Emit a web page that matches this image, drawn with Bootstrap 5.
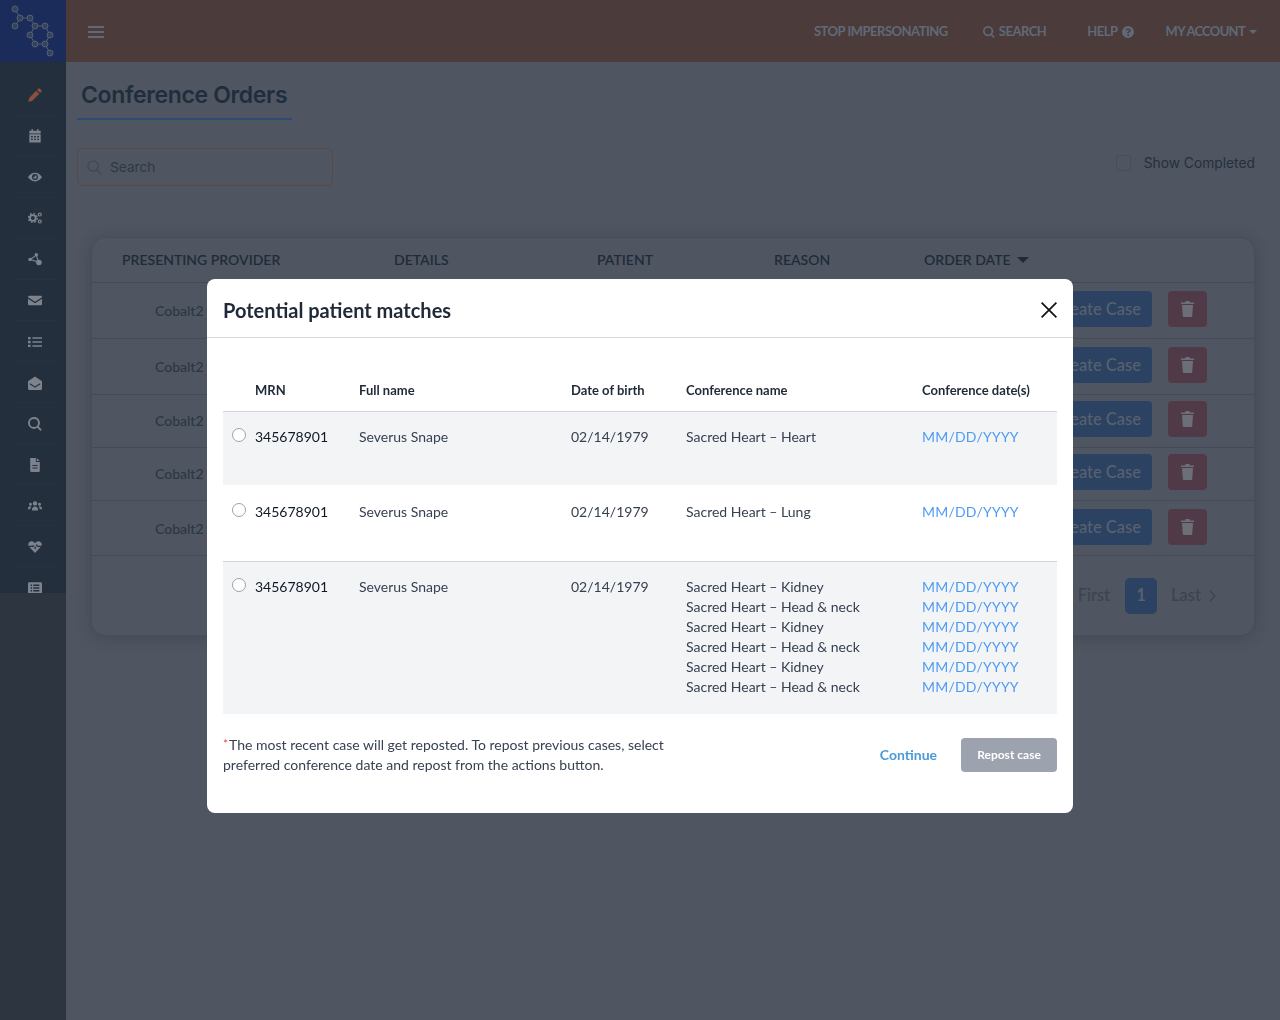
<!doctype html>
<html lang="en">
  <head>
    <meta charset="utf-8">
    <meta name="viewport" content="width=device-width, initial-scale=1">
    <title>Conference Orders</title>
    <link href="https://cdn.jsdelivr.net/npm/bootstrap@5.3.6/dist/css/bootstrap.min.css" rel="stylesheet">
    <style>
      body {
        background: #4f5661;
        font-family: Lato, "Liberation Sans", sans-serif;
        height: 1020px;
        overflow: hidden;
      }

      /* sidebar */
      .side-col { width: 66px; background: #2d3540; height: 1020px; flex: none; }
      .side-logo { height: 62px; background: #1b2b5a; }
      .side-logo svg { width: 66px; height: 62px; display: block; }
      .side-menu { height: 531px; background: #232f3c; overflow: hidden; padding-top: 12.5px; }
      .side-item { height: 41.08px; display: flex; align-items: center; justify-content: center; position: relative; padding-left: 4px; }
      .side-item::after { content: ""; position: absolute; left: 14px; right: 10px; bottom: 0; height: 1px; background: #26323e; }
      .side-item svg { width: 14px; height: 14px; fill: #7c838d; }
      .side-item.is-active svg { fill: #8a4f3f; }

      /* top bar */
      .top-bar { height: 62px; background: #4c3b3b; color: #5f6a76; font-size: 13px; letter-spacing: -.5px; font-weight: 700; padding: 1px 23px 0 22px; }
      .burger { width: 16px; height: 12px; border-top: 2px solid #5f6a76; border-bottom: 2px solid #5f6a76; position: relative; }
      .burger::after { content: ""; position: absolute; left: 0; right: 0; top: 3px; height: 2px; background: #5f6a76; }
      .top-link { display: flex; align-items: center; white-space: nowrap; }
      .top-link svg { fill: #5f6a76; }
      .top-stop { margin-right: 35px; }
      .top-find { margin-right: 41px; }
      .top-help { margin-right: 32px; }
      .top-acct { letter-spacing: -.7px; }
      .caret-sm { width: 0; height: 0; border: 4px solid transparent; border-top-color: #5f6a76; border-bottom: 0; margin-left: 4px; }

      /* page */
      .page-wrap { padding: 0 25px 0 11px; }
      .page-head { width: 215px; height: 58px; padding: 16px 0 0 4px; border-bottom: 2px solid #2f4a75; font-family: Inter, "Liberation Sans", sans-serif; font-size: 23px; line-height: 34px; font-weight: 600; letter-spacing: -.35px; color: #1f2d3d; white-space: nowrap; }
      .filter-row { margin-top: 28px; }
      .search-box { width: 256px; height: 38px; border: 1px solid #5c4843; border-radius: 6px; color: #2e3846; font-size: 13.7px; font-family: Inter, "Liberation Sans", sans-serif; padding-left: 9px; gap: 8px; }
      .search-box svg { width: 15px; height: 15px; stroke: #3c4856; fill: none; stroke-width: 1.2; }
      .show-done { color: #252f3d; font-size: 13.8px; font-family: Inter, "Liberation Sans", sans-serif; gap: 13px; margin-top: -8px; }
      .show-box { width: 15px; height: 16px; border: 1px solid #454e5a; border-radius: 3px; }

      .orders-card { margin: 51px 0 0 14px; height: 399px; border: 1px solid #464d58; border-radius: 14px; box-shadow: 0 2px 14px rgba(30, 36, 46, .25); overflow: hidden; }
      .orders-table { width: 100%; table-layout: fixed; border-collapse: collapse; color: #2b3644; }
      .orders-table th { font-size: 14px; font-weight: 600; height: 44px; padding: 0 0 1px 30px; color: #1f2b3a; border-bottom: 1px solid #444b56; white-space: nowrap; }
      .orders-table td { font-size: 14px; vertical-align: top; border-bottom: 1px solid #444b56; padding: 8px 0 10px 0; }
      .orders-table tr.row-a td { padding-bottom: 11px; }
      .orders-table tr.row-b td { padding-top: 6px; padding-bottom: 10px; }
      .orders-table tr td.provider-cell { padding-left: 63px; padding-bottom: 0; white-space: nowrap; line-height: 40px; font-weight: 500; }
      .sort-caret { display: inline-block; width: 0; height: 0; border: 6px solid transparent; border-top-color: #1f2b3a; border-bottom: 0; margin-left: 6px; vertical-align: 2px; }
      .act-create { background: #2b4263; color: #59616d; height: 36px; width: 118px; border-radius: 4px; font-size: 16.5px; line-height: 36px; text-align: right; padding-right: 11px; font-weight: 500; }
      .act-trash { background: #503a47; height: 36px; width: 39px; border-radius: 4px; margin-left: 16px; }
      .act-trash svg { width: 13px; height: 16px; fill: #6c6f78; }
      .pager { color: #3b4450; font-size: 16.5px; font-weight: 500; padding: 22px 38px 0 0; }
      .pager-one { background: #2b4263; color: #59616d; width: 32px; height: 36px; border-radius: 5px; font-weight: 700; margin: 0 14px 0 15px; }
      .pager-chev { width: 7px; height: 12px; fill: none; stroke: #3b4450; stroke-width: 1.4; margin-left: 8px; }

      /* dialog */
      .match-dialog { max-width: 866px; margin: 279px auto 0; }
      .match-content { border: 0; border-radius: 8px; height: 534px; }
      .match-head { height: 59px; padding: 3px 16px 0; border-bottom: 1px solid #d6d8dc; }
      .match-title { font-size: 20px; font-weight: 700; color: #1f2937; }
      .match-close { width: 16px; height: 16px; padding: 0; border: 0; background: none; margin-right: 0; }
      .match-close svg { display: block; width: 16px; height: 16px; stroke: #111; stroke-width: 1.7; }
      .match-body { padding: 42px 16px 0; }
      .match-table { width: 834px; table-layout: fixed; margin: 0; font-size: 14px; line-height: 20px; color: #374151; }
      .match-table th { font-size: 13px; font-weight: 700; color: #1f2937; padding: 0 0 11px; border-bottom: 1px solid #d1d5db; }
      .match-table td { padding: 15px 0 38px; border: 0; background: transparent; box-shadow: none; color: #374151; }
      .match-table tr.row-shade td { background: #f3f4f6; }
      .match-table tr.row-plain td { padding: 17px 0 39px; border-bottom: 1px solid #d1d5db; }
      .match-table tr.row-tall td { padding-bottom: 17px; }
      .match-table td.mrn-cell { color: #111827; }
      .match-table tr td.radio-cell { padding-left: 9px; }
      .match-radio { width: 14px; height: 14px; border: 1px solid #9ca3af; border-radius: 50%; margin-top: 1px; background: #fff; }
      .date-link { color: #4f9bf3; display: block; text-decoration: none; letter-spacing: .2px; }
      .match-foot { padding: 21px 16px 38px; border: 0; justify-content: space-between; flex-wrap: nowrap; font-size: 14px; line-height: 20px; color: #374151; }
      .match-foot > * { margin: 0; }
      .star-red { color: #ef4444; font-size: 12px; vertical-align: 2px; line-height: 0; margin-right: 1px; }
      .continue-link { color: #4b9ad6; font-weight: 700; font-size: 14px; text-decoration: none; margin-right: 24px; }
      .repost-btn { background: #9ca3af; border: 0; color: #fff; width: 96px; height: 34px; padding: 0; font-size: 12px; font-weight: 700; border-radius: 4px; }
    </style>
  </head>
  <body>
    <svg width="0" height="0" class="position-absolute">
      <symbol id="i-pencil" viewBox="0 0 16 16"><path d="M11.600 .8a1.500 1.500 0 0 1 2.100 0l1.500 1.500a1.500 1.500 0 0 1 0 2.100l-1.400 1.400-3.600-3.600zM9.300 3.100l3.600 3.600-8.200 8.200-4.300.9.900-4.500z"/></symbol>
      <symbol id="i-cal" viewBox="0 0 16 16"><path d="M4 0h1.600v2h4.800V0H12v2h2.500v3h-13V2H4zM1.500 6h13v9.500h-13zM3.500 8v1.600h2V8zm3.500 0v1.600h2V8zm3.500 0v1.600h2V8zm-7 3v1.600h2V11zm3.500 0v1.600h2V11zm3.500 0v1.600h2V11z" fill-rule="evenodd"/></symbol>
      <symbol id="i-eye" viewBox="0 0 16 16"><path d="M8 3c3.500 0 6.400 2.200 8 5-1.600 2.800-4.500 5-8 5S1.600 10.800 0 8c1.600-2.800 4.500-5 8-5zm0 1.600a3.400 3.400 0 1 0 0 6.800 3.400 3.400 0 0 0 0-6.800zm0 1.400a2 2 0 1 1-2 2c.8.500 2.400-.6 2-2z" fill-rule="evenodd"/></symbol>
      <symbol id="i-cogs" viewBox="0 0 16 16">
        <circle cx="5.500" cy="8" r="3.300" fill="none" stroke="#7c838d" stroke-width="2.200"/>
        <circle cx="5.500" cy="8" r="5" fill="none" stroke="#7c838d" stroke-width="1.600" stroke-dasharray="2 1.930"/>
        <circle cx="13.500" cy="4" r="1.700" fill="none" stroke="#7c838d" stroke-width="1.400"/>
        <circle cx="13.500" cy="12" r="1.700" fill="none" stroke="#7c838d" stroke-width="1.400"/>
      </symbol>
      <symbol id="i-nodes" viewBox="0 0 16 16">
        <path d="M2.500 8.500L9.500 3.500L12 11.500L2.500 8.500" fill="none" stroke="#7c838d" stroke-width="1.300"/>
        <circle cx="2.300" cy="8.500" r="2"/><circle cx="9.500" cy="3" r="2"/><circle cx="12.500" cy="12" r="3.200"/>
      </symbol>
      <symbol id="i-mail" viewBox="0 0 16 16"><path d="M0 4.500A1.500 1.500 0 0 1 1.500 3h13A1.500 1.500 0 0 1 16 4.500v.4L8 10 0 4.900zM0 6.700l8 5 8-5v5.800a1.500 1.500 0 0 1-1.500 1.500h-13A1.500 1.500 0 0 1 0 12.500z"/></symbol>
      <symbol id="i-list" viewBox="0 0 16 16"><path d="M0 2.200h3v2.600H0zM5 2.700h11v1.600H5zM0 6.700h3v2.600H0zM5 7.200h11v1.600H5zM0 11.200h3v2.600H0zM5 11.700h11v1.600H5z"/></symbol>
      <symbol id="i-open" viewBox="0 0 16 16"><path d="M8 .5l8 5.500v8.500A1.500 1.500 0 0 1 14.500 16h-13A1.500 1.500 0 0 1 0 14.500V6zM2.500 8.400l-.7.900L8 13.500l6.200-4.200-.7-.9L8 12z" fill-rule="evenodd"/></symbol>
      <symbol id="i-search" viewBox="0 0 16 16"><path d="M6.800 0a6.800 6.800 0 0 1 5.400 10.900l3.500 3.500-1.500 1.500-3.500-3.500A6.800 6.800 0 1 1 6.800 0zm0 2.200a4.600 4.600 0 1 0 0 9.200 4.600 4.600 0 0 0 0-9.200z" fill-rule="evenodd"/></symbol>
      <symbol id="i-file" viewBox="0 0 16 16"><path d="M2.500 0H9v4.500h4.500v10A1.500 1.500 0 0 1 12 16H4a1.500 1.500 0 0 1-1.500-1.500zM10 0l3.500 3.500H10zM5 8v1.200h6V8zm0 2.800V12h6v-1.200z" fill-rule="evenodd"/></symbol>
      <symbol id="i-users" viewBox="0 0 16 16"><circle cx="8" cy="5" r="2.500"/><circle cx="2.800" cy="6" r="1.600"/><circle cx="13.200" cy="6" r="1.600"/><path d="M4.500 12.500c0-2.500 1.300-3.900 3.500-3.900s3.500 1.400 3.500 3.900v.5h-7zM0 10.500C0 9 1 8.200 2.400 8.200c.6 0 1 .1 1.400.4-.8.800-1.100 1.800-1.200 3H0zM16 10.500c0-1.500-1-2.300-2.400-2.300-.6 0-1 .1-1.400.4.800.8 1.100 1.800 1.200 3H16z"/></symbol>
      <symbol id="i-heart" viewBox="0 0 16 16"><path d="M.4 6.500C-.3 3.500 1.700 1.500 4 1.500c1.700 0 3.100 1 4 2.300.9-1.300 2.300-2.300 4-2.300 2.300 0 4.300 2 3.600 5h-4.300L10 4.300 8 9 6 5.300 5 6.500zM1.500 8h4.300l.6-.8L8.100 11l2-4.600.5.800.3.800h3.600L8 14.800z"/></symbol>
      <symbol id="i-alt" viewBox="0 0 16 16"><path d="M1.500 1.500h13A1.500 1.500 0 0 1 16 3v10a1.500 1.500 0 0 1-1.500 1.500h-13A1.500 1.500 0 0 1 0 13V3a1.500 1.500 0 0 1 1.500-1.500zM3 4v1.600h1.600V4zm3 0v1.600h7V4zM3 7.200v1.600h1.600V7.200zm3 0v1.600h7V7.200zM3 10.400V12h1.600v-1.600zm3 0V12h7v-1.600z" fill-rule="evenodd"/></symbol>
      <symbol id="i-trash" viewBox="0 0 13 16"><path d="M4.500 0h4l.5 1.500h4V3H0V1.500h4zM1 4h11l-.8 11a1.100 1.100 0 0 1-1.100 1H2.900a1.100 1.100 0 0 1-1.100-1z"/></symbol>
      <symbol id="i-help" viewBox="0 0 16 16"><path d="M8 0a8 8 0 1 1 0 16A8 8 0 0 1 8 0zm.2 3.200c-1.800 0-3 .8-3.600 2.100l1.500.9c.4-.7.900-1.200 1.900-1.200.8 0 1.400.4 1.400 1 0 .5-.4.800-1.100 1.200-.9.500-1.500 1-1.500 2.200v.4h2.100v-.3c0-.5.400-.8 1-1.200 1-.5 1.700-1.100 1.700-2.400 0-1.600-1.600-2.700-3.400-2.700zM8.300 11a1.200 1.200 0 1 0 0 2.400 1.200 1.200 0 0 0 0-2.400z" fill-rule="evenodd"/></symbol>
    </svg>

    <div class="d-flex">
      <div class="side-col">
        <div class="side-logo">
          <svg viewBox="0 0 66 62" fill="none" stroke="#535f74" stroke-width="1">
            <path d="M15 9L20 18H30L35 26H45L50 35L45 44H35L30 35L35 26M20 18L15 26M45 44L50 53"/>
            <g fill="#36425a">
              <circle cx="15" cy="9" r="3"/><circle cx="20" cy="18" r="3"/><circle cx="30" cy="18" r="3"/><circle cx="15" cy="26" r="3"/>
              <circle cx="35" cy="26" r="3"/><circle cx="45" cy="26" r="3"/><circle cx="30" cy="35" r="3"/><circle cx="50" cy="35" r="3"/>
              <circle cx="35" cy="44" r="3"/><circle cx="45" cy="44" r="3"/><circle cx="50" cy="53" r="3"/>
            </g>
          </svg>
        </div>
        <div class="side-menu">
          <div class="side-item is-active"><svg><use href="#i-pencil"/></svg></div>
          <div class="side-item"><svg><use href="#i-cal"/></svg></div>
          <div class="side-item"><svg><use href="#i-eye"/></svg></div>
          <div class="side-item"><svg><use href="#i-cogs"/></svg></div>
          <div class="side-item"><svg><use href="#i-nodes"/></svg></div>
          <div class="side-item"><svg><use href="#i-mail"/></svg></div>
          <div class="side-item"><svg><use href="#i-list"/></svg></div>
          <div class="side-item"><svg><use href="#i-open"/></svg></div>
          <div class="side-item"><svg><use href="#i-search"/></svg></div>
          <div class="side-item"><svg><use href="#i-file"/></svg></div>
          <div class="side-item"><svg><use href="#i-users"/></svg></div>
          <div class="side-item"><svg><use href="#i-heart"/></svg></div>
          <div class="side-item"><svg><use href="#i-alt"/></svg></div>
        </div>
      </div>

      <div class="flex-grow-1">
        <div class="top-bar d-flex align-items-center justify-content-between">
          <div class="burger"></div>
          <div class="d-flex align-items-center">
            <span class="top-link top-stop">STOP IMPERSONATING</span>
            <span class="top-link top-find"><svg width="12" height="12" class="me-1"><use href="#i-search"/></svg>SEARCH</span>
            <span class="top-link top-help">HELP<svg width="12" height="12" class="ms-1"><use href="#i-help"/></svg></span>
            <span class="top-link top-acct">MY ACCOUNT<span class="caret-sm"></span></span>
          </div>
        </div>

        <div class="page-wrap">
          <div class="page-head">Conference Orders</div>
          <div class="filter-row d-flex align-items-center justify-content-between">
            <div class="search-box d-flex align-items-center">
              <svg viewBox="0 0 16 16"><circle cx="6.500" cy="6.500" r="5.500"/><path d="M10.500 10.500l5 5"/></svg>
              <span>Search</span>
            </div>
            <div class="show-done d-flex align-items-center">
              <span class="show-box"></span>
              <span>Show Completed</span>
            </div>
          </div>

          <div class="orders-card">
            <table class="orders-table">
              <colgroup>
                <col style="width: 272px"><col style="width: 203px"><col style="width: 177px"><col style="width: 150px"><col style="width: 140px"><col>
              </colgroup>
              <thead>
                <tr>
                  <th>PRESENTING PROVIDER</th><th>DETAILS</th><th>PATIENT</th><th>REASON</th><th>ORDER DATE<span class="sort-caret"></span></th><th></th>
                </tr>
              </thead>
              <tbody>
                <tr class="row-a">
                  <td class="provider-cell">Cobalt2</td><td></td><td></td><td></td><td></td>
                  <td><div class="d-flex"><div class="act-create">Create Case</div><div class="act-trash d-flex align-items-center justify-content-center"><svg><use href="#i-trash"/></svg></div></div></td>
                </tr>
                <tr class="row-a">
                  <td class="provider-cell">Cobalt2</td><td></td><td></td><td></td><td></td>
                  <td><div class="d-flex"><div class="act-create">Create Case</div><div class="act-trash d-flex align-items-center justify-content-center"><svg><use href="#i-trash"/></svg></div></div></td>
                </tr>
                <tr class="row-b">
                  <td class="provider-cell">Cobalt2</td><td></td><td></td><td></td><td></td>
                  <td><div class="d-flex"><div class="act-create">Create Case</div><div class="act-trash d-flex align-items-center justify-content-center"><svg><use href="#i-trash"/></svg></div></div></td>
                </tr>
                <tr class="row-b">
                  <td class="provider-cell">Cobalt2</td><td></td><td></td><td></td><td></td>
                  <td><div class="d-flex"><div class="act-create">Create Case</div><div class="act-trash d-flex align-items-center justify-content-center"><svg><use href="#i-trash"/></svg></div></div></td>
                </tr>
                <tr>
                  <td class="provider-cell">Cobalt2</td><td></td><td></td><td></td><td></td>
                  <td><div class="d-flex"><div class="act-create">Create Case</div><div class="act-trash d-flex align-items-center justify-content-center"><svg><use href="#i-trash"/></svg></div></div></td>
                </tr>
              </tbody>
            </table>
            <div class="pager d-flex align-items-center justify-content-end">
              <span>First</span>
              <span class="pager-one d-flex align-items-center justify-content-center">1</span>
              <span>Last</span>
              <svg class="pager-chev" viewBox="0 0 7 12"><path d="M1 1l5 5-5 5"/></svg>
            </div>
          </div>
        </div>
      </div>
    </div>

    <div class="modal d-block" tabindex="-1">
      <div class="modal-dialog match-dialog">
        <div class="modal-content match-content">
          <div class="modal-header match-head">
            <h5 class="modal-title match-title">Potential patient matches</h5>
            <button type="button" class="match-close" aria-label="Close">
              <svg viewBox="0 0 16 16"><path d="M.6.6l14.800 14.800M15.400.6L.6 15.400"/></svg>
            </button>
          </div>
          <div class="modal-body match-body">
            <table class="table match-table">
              <colgroup>
                <col style="width: 32px"><col style="width: 104px"><col style="width: 212px"><col style="width: 115px"><col style="width: 236px"><col style="width: 135px">
              </colgroup>
              <thead>
                <tr><th></th><th>MRN</th><th>Full name</th><th>Date of birth</th><th>Conference name</th><th>Conference date(s)</th></tr>
              </thead>
              <tbody>
                <tr class="row-shade">
                  <td class="radio-cell"><input class="form-check-input match-radio" type="radio" name="match"></td>
                  <td class="mrn-cell">345678901</td><td>Severus Snape</td><td>02/14/1979</td>
                  <td>Sacred Heart – Heart</td>
                  <td><a class="date-link" href="#">MM/DD/YYYY</a></td>
                </tr>
                <tr class="row-plain">
                  <td class="radio-cell"><input class="form-check-input match-radio" type="radio" name="match"></td>
                  <td class="mrn-cell">345678901</td><td>Severus Snape</td><td>02/14/1979</td>
                  <td>Sacred Heart – Lung</td>
                  <td><a class="date-link" href="#">MM/DD/YYYY</a></td>
                </tr>
                <tr class="row-shade row-tall">
                  <td class="radio-cell"><input class="form-check-input match-radio" type="radio" name="match"></td>
                  <td class="mrn-cell">345678901</td><td>Severus Snape</td><td>02/14/1979</td>
                  <td>Sacred Heart – Kidney<br>Sacred Heart – Head &amp; neck<br>Sacred Heart – Kidney<br>Sacred Heart – Head &amp; neck<br>Sacred Heart – Kidney<br>Sacred Heart – Head &amp; neck</td>
                  <td>
                    <a class="date-link" href="#">MM/DD/YYYY</a><a class="date-link" href="#">MM/DD/YYYY</a><a class="date-link" href="#">MM/DD/YYYY</a>
                    <a class="date-link" href="#">MM/DD/YYYY</a><a class="date-link" href="#">MM/DD/YYYY</a><a class="date-link" href="#">MM/DD/YYYY</a>
                  </td>
                </tr>
              </tbody>
            </table>
          </div>
          <div class="modal-footer match-foot">
            <p><span class="star-red">*</span>The most recent case will get reposted. To repost previous cases, select<br>preferred conference date and repost from the actions button.</p>
            <div class="d-flex align-items-center">
              <a class="continue-link" href="#">Continue</a>
              <button type="button" class="btn repost-btn">Repost case</button>
            </div>
          </div>
        </div>
      </div>
    </div>

    <script src="https://cdn.jsdelivr.net/npm/bootstrap@5.3.6/dist/js/bootstrap.bundle.min.js"></script>
  </body>
</html>
